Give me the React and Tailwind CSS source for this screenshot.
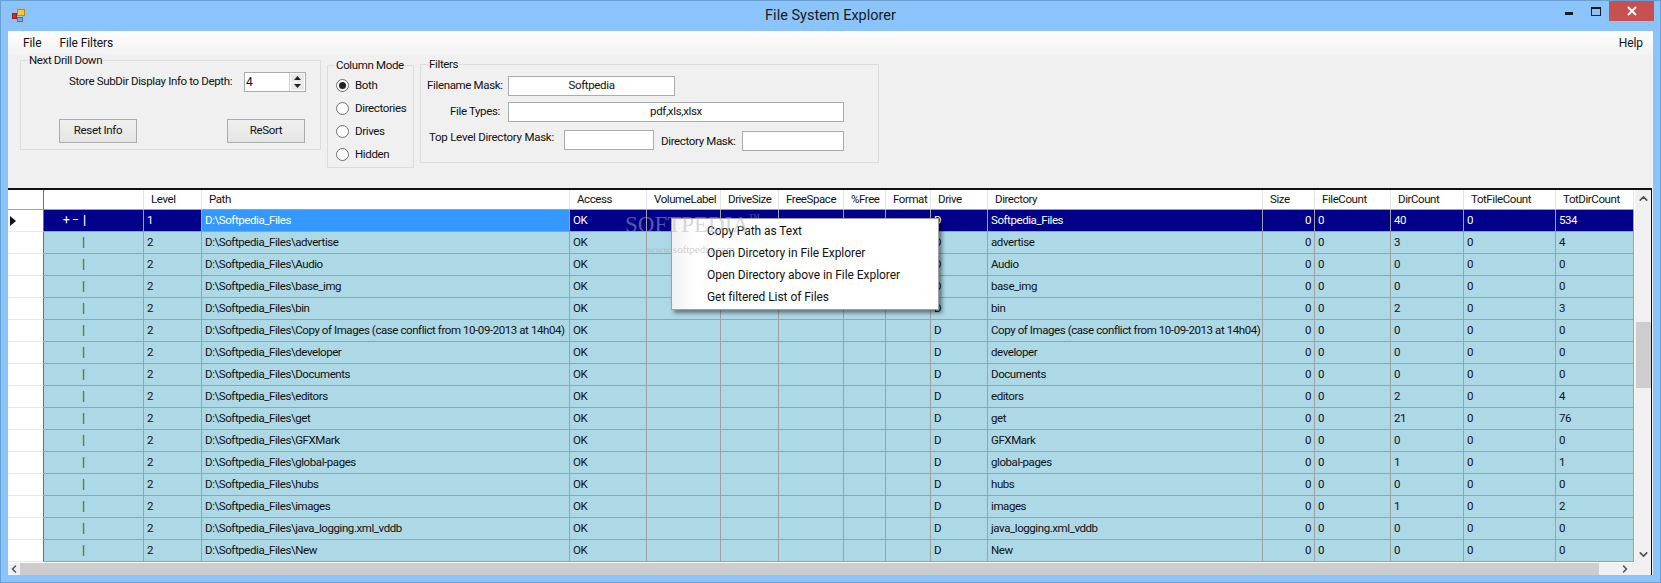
import { ChevronUp, ChevronDown, ChevronLeft, ChevronRight } from 'lucide-react'

const rows = [
  { level: 1, path: 'Softpedia_Files', dir: 'Softpedia_Files', dirCount: 40, totDir: 534 },
  { level: 2, path: 'Softpedia_Files\\advertise', dir: 'advertise', dirCount: 3, totDir: 4 },
  { level: 2, path: 'Softpedia_Files\\Audio', dir: 'Audio', dirCount: 0, totDir: 0 },
  { level: 2, path: 'Softpedia_Files\\base_img', dir: 'base_img', dirCount: 0, totDir: 0 },
  { level: 2, path: 'Softpedia_Files\\bin', dir: 'bin', dirCount: 2, totDir: 3 },
  { level: 2, path: 'Softpedia_Files\\Copy of Images (case conflict from 10-09-2013 at 14h04)', dir: 'Copy of Images (case conflict from 10-09-2013 at 14h04)', dirCount: 0, totDir: 0 },
  { level: 2, path: 'Softpedia_Files\\developer', dir: 'developer', dirCount: 0, totDir: 0 },
  { level: 2, path: 'Softpedia_Files\\Documents', dir: 'Documents', dirCount: 0, totDir: 0 },
  { level: 2, path: 'Softpedia_Files\\editors', dir: 'editors', dirCount: 2, totDir: 4 },
  { level: 2, path: 'Softpedia_Files\\get', dir: 'get', dirCount: 21, totDir: 76 },
  { level: 2, path: 'Softpedia_Files\\GFXMark', dir: 'GFXMark', dirCount: 0, totDir: 0 },
  { level: 2, path: 'Softpedia_Files\\global-pages', dir: 'global-pages', dirCount: 1, totDir: 1 },
  { level: 2, path: 'Softpedia_Files\\hubs', dir: 'hubs', dirCount: 0, totDir: 0 },
  { level: 2, path: 'Softpedia_Files\\images', dir: 'images', dirCount: 1, totDir: 2 },
  { level: 2, path: 'Softpedia_Files\\java_logging.xml_vddb', dir: 'java_logging.xml_vddb', dirCount: 0, totDir: 0 },
  { level: 2, path: 'Softpedia_Files\\New', dir: 'New', dirCount: 0, totDir: 0 },
]

const headers = ['Level', 'Path', 'Access', 'VolumeLabel', 'DriveSize', 'FreeSpace', '%Free', 'Format', 'Drive', 'Directory', 'Size', 'FileCount', 'DirCount', 'TotFileCount', 'TotDirCount']

const menuItems = ['Copy Path as Text', 'Open Dircetory in File Explorer', 'Open Directory above in File Explorer', 'Get filtered List of Files']

function Cell({ children, className = '' }) {
  return <td className={`h-[22px] border-r border-b border-[#a0a0a0] px-[3px] overflow-hidden whitespace-nowrap ${className}`}>{children}</td>
}

function Group({ title, className, children }) {
  return (
    <div className={`relative shrink-0 border border-[#dcdcdc] ${className}`}>
      <span className="absolute left-[7px] -top-[8px] whitespace-nowrap bg-[#f0f0f0] px-px leading-[14px]">{title}</span>
      {children}
    </div>
  )
}

function Radio({ label, checked }) {
  return (
    <div className="flex h-[23px] items-center gap-[6px]">
      <span className="flex h-[13px] w-[13px] items-center justify-center rounded-full border border-[#707070] bg-white">
        {checked && <span className="h-[7px] w-[7px] rounded-full bg-[#222]" />}
      </span>
      <span className="pt-px">{label}</span>
    </div>
  )
}

function Input({ value, className }) {
  return <div className={`flex h-[20px] items-center justify-center border border-[#ababab] bg-white ${className}`}>{value}</div>
}

function Button({ label }) {
  return <div className="flex h-[24px] w-[78px] items-center justify-center border border-[#acacac] bg-gradient-to-b from-[#f0f0f0] to-[#e5e5e5]">{label}</div>
}

export default function App() {
  return (
    <div className="relative flex h-[583px] w-[1661px] flex-col overflow-hidden border border-[#6a9fd4] bg-[#8ac4fb] px-[7px] text-[11.5px] tracking-[-0.35px] text-[#111] font-['Roboto','Liberation_Sans',sans-serif]">
      {/* title bar */}
      <div className="relative flex h-[30px] shrink-0 items-center justify-center">
        <svg className="absolute left-[3px] top-[7px]" width="16" height="16" viewBox="0 0 16 16">
          <rect x="0.5" y="0.5" width="15" height="14" fill="none" stroke="#9fb8d0" strokeWidth="0.6" />
          <rect x="1.5" y="5.5" width="4" height="5" fill="#d22" stroke="#922" />
          <rect x="6.5" y="1.5" width="7" height="6" fill="#fbc93a" stroke="#b88a1a" />
          <rect x="6.5" y="9.5" width="5" height="4" fill="#7ea6e0" stroke="#4a70b0" />
        </svg>
        <span className="text-[14.5px] tracking-normal text-[#1a1a1a]">File System Explorer</span>
        <div className="absolute right-[-1px] top-0 flex items-start">
          <div className="mr-[18px] mt-[11px] h-[3px] w-[8px] bg-[#1a1a1a]" />
          <div className="mr-[8px] mt-[6px] h-[9px] w-[10px] border border-t-2 border-[#1a1a1a]" />
          <div className="flex h-[20px] w-[45px] items-center justify-center bg-[#c75050]">
            <svg width="10" height="10" viewBox="0 0 10 10"><path d="M1 1 9 9M9 1 1 9" stroke="white" strokeWidth="2" /></svg>
          </div>
        </div>
      </div>

      {/* client area */}
      <div className="flex min-h-0 flex-1 flex-col bg-[#f0f0f0]">
        <div className="flex h-[24px] shrink-0 items-center justify-between bg-gradient-to-b from-[#fdfdfd] to-[#f3f3f3] pl-[15px] pr-[10px] text-[12px] tracking-[-0.1px]">
          <div className="flex gap-[18px]">
            <span>File</span>
            <span>File Filters</span>
          </div>
          <span>Help</span>
        </div>

        <div className="flex h-[133px] shrink-0 items-start pl-[12px]">
          <Group title="Next Drill Down" className="mt-[5px] h-[90px] w-[301px]">
            <div className="mt-[11px] flex items-center pl-[48px]">
              <span className="w-[175px] whitespace-nowrap">Store SubDir Display Info to Depth:</span>
              <div className="flex h-[20px] w-[62px] items-center justify-between border border-[#ababab] bg-white pl-[1px]">
                <span className="text-[12px]">4</span>
                <div className="flex h-full w-[16px] flex-col gap-px border-l border-[#d0d0d0] p-px">
                  <div className="flex flex-1 items-center justify-center bg-[#e8e8e8]"><svg width="7" height="4"><path d="M3.5 0 7 4H0z" fill="#222" /></svg></div>
                  <div className="flex flex-1 items-center justify-center bg-[#e8e8e8]"><svg width="7" height="4"><path d="M0 0h7L3.5 4z" fill="#222" /></svg></div>
                </div>
              </div>
            </div>
            <div className="mt-[27px] flex justify-between pl-[38px] pr-[15px]">
              <Button label="Reset Info" />
              <Button label="ReSort" />
            </div>
          </Group>

          <Group title="Column Mode" className="ml-[6px] mt-[10px] h-[103px] w-[87px]">
            <div className="flex flex-col pl-[8px] pt-[8px]">
              <Radio label="Both" checked />
              <Radio label="Directories" />
              <Radio label="Drives" />
              <Radio label="Hidden" />
            </div>
          </Group>

          <Group title="Filters" className="ml-[6px] mt-[9px] h-[99px] w-[459px]">
            <div className="flex flex-col pl-[6px] pt-[11px]">
              <div className="flex items-center">
                <span className="w-[76px] whitespace-nowrap pr-[3px] text-right">Filename Mask:</span>
                <Input value="Softpedia" className="ml-[5px] w-[167px]" />
              </div>
              <div className="mt-[6px] flex items-center">
                <span className="w-[76px] whitespace-nowrap pr-[3px] text-right">File Types:</span>
                <Input value="pdf,xls,xlsx" className="ml-[5px] w-[336px]" />
              </div>
              <div className="mt-[8px] flex items-start">
                <span className="-mt-px w-[128px] whitespace-nowrap pl-[2px] tracking-[-0.25px]">Top Level Directory Mask:</span>
                <Input className="ml-[9px] w-[90px]" />
                <span className="ml-[7px] mt-[3px] w-[81px] whitespace-nowrap">Directory Mask:</span>
                <Input className="mt-px w-[102px]" />
              </div>
            </div>
          </Group>
        </div>

        {/* data grid */}
        <div className="mr-px flex min-h-0 flex-1 flex-col border-t-2 border-r border-[#111] bg-white">
          <div className="flex min-h-0 flex-1">
            <div className="min-w-0 flex-1 overflow-hidden">
              <table className="w-[1626px] table-fixed border-separate border-spacing-0 tracking-[-0.42px]">
                <colgroup>
                  <col className="w-[36px]" />
                  <col className="w-[100px]" />
                  <col className="w-[58px]" />
                  <col className="w-[368px]" />
                  <col className="w-[77px]" />
                  <col className="w-[74px]" />
                  <col className="w-[58px]" />
                  <col className="w-[65px]" />
                  <col className="w-[42px]" />
                  <col className="w-[45px]" />
                  <col className="w-[57px]" />
                  <col className="w-[275px]" />
                  <col className="w-[52px]" />
                  <col className="w-[76px]" />
                  <col className="w-[73px]" />
                  <col className="w-[92px]" />
                  <col className="w-[78px]" />
                </colgroup>
                <thead>
                  <tr>
                    <th className="h-[20px] border-b border-[#a0a0a0] border-r border-r-[#707070] bg-white" />
                    <th className="h-[20px] border-b border-r border-b-[#a0a0a0] border-r-[#e5e5e5] bg-white" />
                    {headers.map((h) => (
                      <th key={h} className="h-[20px] overflow-hidden whitespace-nowrap border-b border-r border-b-[#a0a0a0] border-r-[#e5e5e5] bg-white pl-[7px] text-left font-normal">{h}</th>
                    ))}
                  </tr>
                </thead>
                <tbody>
                  {rows.map((r, i) => {
                    const sel = i === 0
                    const bg = sel ? 'bg-[#00008b] text-white' : 'bg-[#add8e6]'
                    return (
                      <tr key={r.path} className={bg}>
                        <td className="h-[22px] border-r border-b border-r-[#707070] border-b-[#e8e8e8] bg-white">
                          {sel && <svg className="ml-[2px]" width="6" height="10"><path d="M0 0 6 5 0 10z" fill="#111" /></svg>}
                        </td>
                        <Cell className={sel ? 'pl-[19px]' : 'pl-[38px]'}>
                          {sel ? <span className="text-[12px]">+ − <span className="ml-[2px] font-black">|</span></span> : <span className="text-[12px] font-black text-[#5c5c30]">|</span>}
                        </Cell>
                        <Cell>{r.level}</Cell>
                        <Cell className={sel ? 'bg-[#3399ff]' : ''}>D:\{r.path}</Cell>
                        <Cell>OK</Cell>
                        <Cell />
                        <Cell />
                        <Cell />
                        <Cell />
                        <Cell />
                        <Cell>D</Cell>
                        <Cell>{r.dir}</Cell>
                        <Cell className="text-right">0</Cell>
                        <Cell>0</Cell>
                        <Cell>{r.dirCount}</Cell>
                        <Cell>0</Cell>
                        <Cell>{r.totDir}</Cell>
                      </tr>
                    )
                  })}
                </tbody>
              </table>
            </div>
            {/* vertical scrollbar */}
            <div className="flex w-[17px] shrink-0 flex-col items-center border-l border-white bg-[#f0f0f0] text-[#505050]">
              <ChevronUp className="my-[2px]" size={13} strokeWidth={3} />
              <div className="mt-[115px] h-[66px] w-[15px] bg-[#cdcdcd]" />
              <ChevronDown className="mb-[2px] mt-auto" size={13} strokeWidth={3} />
            </div>
          </div>
          {/* horizontal scrollbar */}
          <div className="flex h-[12px] shrink-0 items-center bg-[#f0f0f0] text-[#505050]">
            <ChevronLeft className="w-[12px] shrink-0" size={12} strokeWidth={3} />
            <div className="h-full w-[1579px] bg-[#cdcdcd]" />
            <ChevronRight className="ml-[20px]" size={12} strokeWidth={3} />
          </div>
        </div>
      </div>
      <div className="h-[7px] shrink-0" />

      {/* context menu */}
      <div className="absolute left-[670px] top-[217px] h-[92px] w-[268px] border border-[#a0a0a0] bg-white text-[12px] tracking-[-0.05px] shadow-[3px_3px_4px_rgba(0,0,0,0.45)]">
        <div className="flex h-full flex-col justify-center bg-gradient-to-r from-[#f1f1f1] from-0% to-white to-[9%] py-px">
          {menuItems.map((m) => (
            <div key={m} className="flex h-[22px] items-center pl-[35px]">{m}</div>
          ))}
        </div>
      </div>

      {/* softpedia watermark */}
      <div className="pointer-events-none absolute left-[624px] top-[209px] font-['Liberation_Serif',serif] text-[23px] leading-[30px] tracking-normal text-[#b0b0b0]/50">SOFTPEDIA</div>
      <div className="pointer-events-none absolute left-[748px] top-[210px] font-['Liberation_Serif',serif] text-[7px] leading-[10px] tracking-normal text-[#b0b0b0]/50">TM</div>
      <div className="pointer-events-none absolute left-[646px] top-[241px] font-['Liberation_Serif',serif] text-[11px] leading-[14px] tracking-normal text-[#b0b0b0]/60">www.softpedia.com</div>
    </div>
  )
}
